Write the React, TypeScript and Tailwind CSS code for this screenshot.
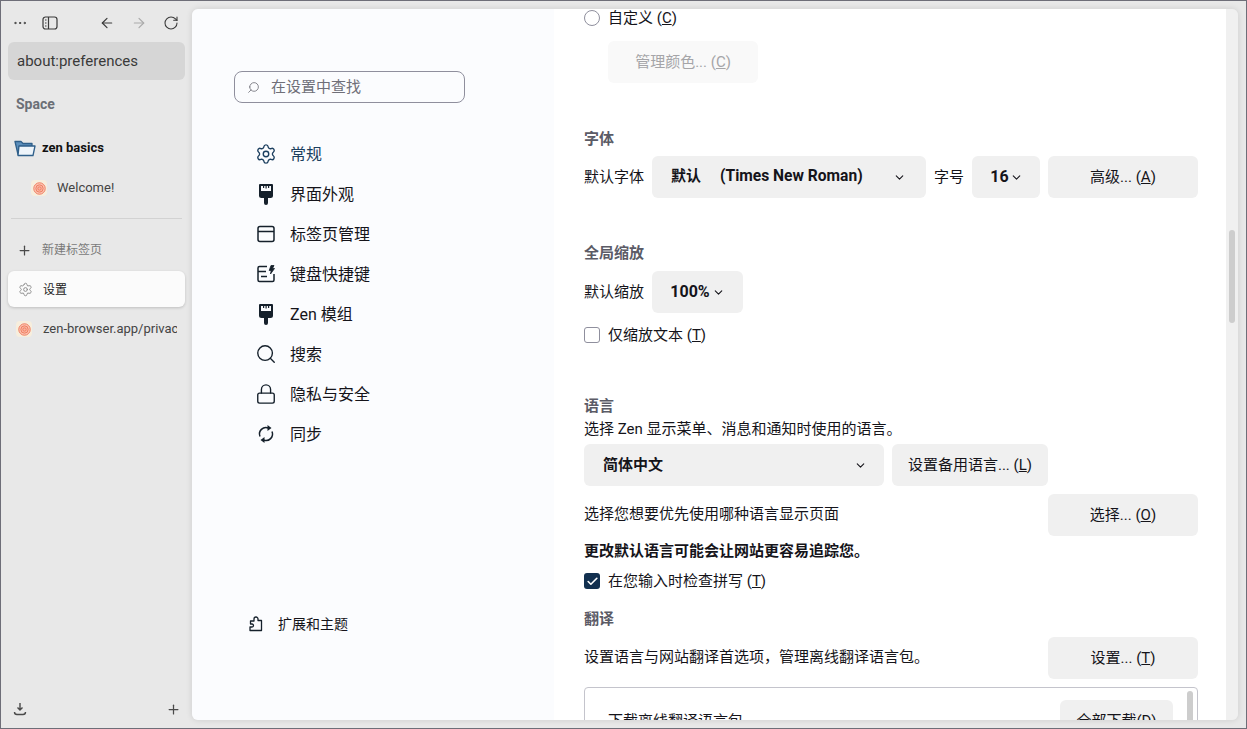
// Zen browser window showing about:preferences, scrolled to the fonts / language part of the page.
import type { ReactNode } from "react";
import { ArrowLeft, ArrowRight, Ellipsis, Plus, RotateCw, Search, Settings, Lock, ChevronDown, Check } from "lucide-react";

const FONT = { fontFamily: 'Roboto, "Noto Sans CJK SC", sans-serif' };
const BTN = "flex h-[42px] items-center rounded-[6px] bg-[#f0f0f0] text-[15px] text-[#15141a]";
const HEAD = "flex h-5 items-center text-[15px] font-semibold text-[#5b5b66]";

function Brush() {
  return (
    <svg width="18" height="22" viewBox="0 0 18 22" fill="#15202b">
      <path d="M3 1h12a1 1 0 0 1 1 1v10.500a2.500 2.500 0 0 1-2.500 2.500H11v5a2 2 0 0 1-4 0v-5H4.500A2.500 2.500 0 0 1 2 12.500V2a1 1 0 0 1 1-1z" />
      <path d="M4 3h10v5H4z" fill="#fbfcfe" />
      <path d="M6 3h1.200v2H6zM8.500 3h1.200v2.600H8.500zM11 3h1.200v2H11z" />
    </svg>
  );
}

function TabIcon() {
  return (
    <svg width="20" height="20" viewBox="0 0 20 20" fill="none" stroke="#15202b" strokeWidth="1.5">
      <rect x="2" y="2.500" width="16" height="15" rx="2" />
      <path d="M2 7.500h16" />
    </svg>
  );
}

function KeyIcon() {
  return (
    <svg width="20" height="20" viewBox="0 0 20 20" fill="none" stroke="#15202b" strokeWidth="1.500" strokeLinejoin="round">
      <path d="M11 2.500H3.500A1.500 1.500 0 0 0 2 4v12a1.500 1.500 0 0 0 1.500 1.500h13A1.500 1.500 0 0 0 18 16v-6" />
      <path d="M2 7.500h8M5 12.500h6" />
      <path d="M15 1.500h3l-1.500 3h2L14.500 10l.7-3.500h-2z" fill="#15202b" strokeWidth="0.8" />
    </svg>
  );
}

function SyncIcon() {
  return (
    <svg width="20" height="20" viewBox="0 0 20 20" fill="none" stroke="#15202b" strokeWidth="1.500">
      <path d="M4 12.500A6.500 6.500 0 0 1 12.500 4" />
      <path d="M16 7.500A6.500 6.500 0 0 1 7.500 16" />
      <path d="M11.500 1l4 3-4 3z" fill="#15202b" stroke="none" />
      <path d="M8.500 13l-4 3 4 3z" fill="#15202b" stroke="none" />
    </svg>
  );
}

function PuzzleIcon() {
  return (
    <svg width="16" height="16" viewBox="0 0 16 16" fill="none" stroke="#15202b" strokeWidth="1.300" strokeLinejoin="round">
      <path d="M2 14.500h11.500V4.500H10V3a2 2 0 0 0-4 0v2H2.500v3H4a1.500 1.500 0 0 1 0 3H2z" />
    </svg>
  );
}

function Favicon() {
  return (
    <span className="flex h-4 w-4 shrink-0 items-center justify-center rounded-[4px] bg-[#f7eedd]">
      <svg width="13" height="13" viewBox="0 0 12 12" fill="none" stroke="#f07f62" strokeWidth="0.9">
        <circle cx="6" cy="6" r="5.300" fill="#fbc3b2" />
        <circle cx="6" cy="6" r="3.400" fill="#f9b4a0" />
        <circle cx="6" cy="6" r="1.500" />
      </svg>
    </span>
  );
}

function Accel({ k }: { k: string }) {
  return (
    <>
      {" "}
      (<span className="underline underline-offset-1">{k}</span>)
    </>
  );
}

function Sidebar() {
  return (
    <aside className="flex w-[191px] shrink-0 flex-col pl-[7px] pr-[7px]">
      <div className="flex h-[41px] items-center pt-[3px] text-[#3a3a3a]">
        <Ellipsis size={16} className="ml-[4px]" strokeWidth={1.500} />
        <svg width="16" height="16" viewBox="0 0 16 16" fill="none" stroke="#3a3a3a" strokeWidth="1.200" className="ml-[14px]">
          <rect x="1" y="2" width="14" height="12" rx="2.500" />
          <path d="M6.500 2v12M3 5h1.500M3 8h1.500M3 11h1.500" />
        </svg>
        <ArrowLeft size={16} className="ml-[41px]" strokeWidth={1.800} />
        <ArrowRight size={16} className="ml-[16px] text-[#aaaaaa]" strokeWidth={1.800} />
        <RotateCw size={16} className="ml-[16px]" strokeWidth={1.600} />
      </div>
      <div className="flex h-[38px] items-center rounded-[6px] bg-[#d6d6d6] pl-[9px] text-[15px] text-[#3a3a3a]">about:preferences</div>
      <div className="mt-[14px] flex h-5 items-center pl-[8px] text-[14px] font-bold text-[#6b6f76]">Space</div>
      <div className="mt-[22px] flex h-6 items-center pl-[6px]">
        <svg width="22" height="18" viewBox="0 0 22 18" stroke="#2f5f8a" strokeWidth="1.300" strokeLinejoin="round">
          <path d="M1 2.500h6l2 2h9v3H5l-1 8z" fill="#5c8fbc" />
          <path d="M5 7h16l-2 9.500H4z" fill="#edf4fa" />
        </svg>
        <span className="ml-[6px] text-[13px] font-bold text-[#111111]">zen basics</span>
      </div>
      <div className="mt-[16px] flex h-6 items-center pl-[23px]">
        <Favicon />
        <span className="ml-[10px] text-[13px] text-[#444444]">Welcome!</span>
      </div>
      <div className="mx-[3px] mt-[18px] h-px bg-[#d2d2d2]" />
      <div className="mt-[19px] flex h-6 items-center pl-[9px] text-[12px] text-[#7a7a7a]">
        <Plus size={15} className="text-[#4a4a4a]" strokeWidth={2} />
        <span className="ml-[10px]">新建标签页</span>
      </div>
      <div className="mt-[9px] flex h-9 items-center rounded-[6px] bg-[#fbfbfb] pl-[10px] text-[12px] text-[#222222] shadow-[0_1px_3px_rgba(0,0,0,0.18)]">
        <Settings size={15} className="text-[#8a8a8a]" strokeWidth={1.500} />
        <span className="ml-[10px] pt-[2px]">设置</span>
      </div>
      <div className="mt-[10px] flex h-6 items-center overflow-hidden pl-[8px]">
        <Favicon />
        <span className="ml-[11px] w-[134px] overflow-hidden whitespace-nowrap text-[13px] text-[#444444]">zen-browser.app/privac</span>
      </div>
      <div className="mt-auto flex h-[26px] items-start justify-between pl-[5px] pr-[4px] text-[#4a4a4a]">
        <svg width="14" height="14" viewBox="0 0 14 14" fill="none" stroke="#4a4a4a" strokeWidth="1.400">
          <path d="M7 1v6.500M4.500 5.500L7 8l2.500-2.500" />
          <path d="M1.500 10c0 1.500 1 2.500 2.500 2.500h6c1.500 0 2.500-1 2.500-2.500" />
        </svg>
        <Plus size={15} strokeWidth={2} />
      </div>
    </aside>
  );
}

function NavItem({ icon, label, accent }: { icon: ReactNode; label: string; accent?: boolean }) {
  return (
    <div className={`flex h-10 items-center pl-[63px] text-[16px] ${accent ? "text-[#1c3f5f]" : "text-[#15141a]"}`}>
      <span className="flex w-[22px] justify-center">{icon}</span>
      <span className="ml-[13px] pt-[2px]">{label}</span>
    </div>
  );
}

function Nav() {
  return (
    <nav className="flex w-[362px] shrink-0 flex-col bg-[#fbfcfe]">
      <div className="ml-[42px] mt-[62px] flex h-8 w-[231px] items-center rounded-[8px] border border-[#8f8f9d] pl-[12px] text-[15px] text-[#6f6f78]">
        <Search size={13} className="-scale-x-100 text-[#6f6f78]" strokeWidth={1.500} />
        <span className="ml-[11px]">在设置中查找</span>
      </div>
      <div className="mt-[31px] flex flex-col">
        <NavItem accent label="常规" icon={<Settings size={22} className="text-[#1c3f5f]" strokeWidth={1.500} />} />
        <NavItem label="界面外观" icon={<Brush />} />
        <NavItem label="标签页管理" icon={<TabIcon />} />
        <NavItem label="键盘快捷键" icon={<KeyIcon />} />
        <NavItem label="Zen 模组" icon={<Brush />} />
        <NavItem label="搜索" icon={<Search size={22} className="text-[#15202b]" strokeWidth={1.500} />} />
        <NavItem label="隐私与安全" icon={<Lock size={22} className="text-[#15202b]" strokeWidth={1.500} />} />
        <NavItem label="同步" icon={<SyncIcon />} />
      </div>
      <div className="ml-[56px] mt-[160px] flex h-5 items-center text-[14px] text-[#15141a]">
        <PuzzleIcon />
        <span className="ml-[14px]">扩展和主题</span>
      </div>
    </nav>
  );
}

function Prefs() {
  return (
    <main className="flex min-w-0 flex-1 flex-col overflow-hidden bg-white pl-[30px] text-[15px] text-[#15141a]">
      <div className="w-[614px]">
        <div className="flex h-[18px] items-center">
          <span className="h-4 w-4 rounded-full border border-[#8f8f9d]" />
          <span className="ml-2">自定义<Accel k="C" /></span>
        </div>
        <div className="ml-6 mt-[14px] flex h-[42px] w-[150px] items-center justify-center rounded-[6px] bg-[#f9f9f9] text-[#a5a5a8]">
          管理颜色...<Accel k="C" />
        </div>

        <div className={`${HEAD} mt-[46px]`}>字体</div>
        <div className="mt-[7px] flex h-[42px] items-center">
          <span className="w-[68px]">默认字体</span>
          <div className={`${BTN} w-[274px] justify-between pl-[19px] pr-[20px] font-bold`}>
            <span>默认<span className="ml-[19px] text-[15.6px]">(Times New Roman)</span></span>
            <ChevronDown size={13} />
          </div>
          <span className="ml-2 w-[38px]">字号</span>
          <div className={`${BTN} w-[68px] justify-center gap-[1px] pl-[1px] font-bold`}>
            <span className="text-[16px]">16</span>
            <ChevronDown size={13} />
          </div>
          <div className={`${BTN} ml-2 w-[150px] justify-center`}>高级...<Accel k="A" /></div>
        </div>

        <div className={`${HEAD} mt-[45px]`}>全局缩放</div>
        <div className="mt-[8px] flex h-[42px] items-center">
          <span className="w-[68px]">默认缩放</span>
          <div className={`${BTN} w-[91px] justify-center gap-[2px] font-bold`}>
            <span className="text-[16px]">100%</span>
            <ChevronDown size={13} />
          </div>
        </div>
        <div className="mt-[12px] flex h-5 items-center">
          <span className="h-4 w-4 rounded-[3px] border border-[#8f8f9d]" />
          <span className="ml-2">仅缩放文本<Accel k="T" /></span>
        </div>

        <div className={`${HEAD} mt-[51px]`}>语言</div>
        <div className="mt-[3px] flex h-5 items-center">选择 Zen 显示菜单、消息和通知时使用的语言。</div>
        <div className="mt-[5px] flex h-[42px] items-center">
          <div className={`${BTN} w-[300px] justify-between pl-[19px] pr-[17px] font-bold`}>
            <span>简体中文</span>
            <ChevronDown size={13} />
          </div>
          <div className={`${BTN} ml-2 w-[156px] justify-center`}>设置备用语言...<Accel k="L" /></div>
        </div>
        <div className="mt-2 flex h-[42px] items-center justify-between">
          <span className="pb-[2px]">选择您想要优先使用哪种语言显示页面</span>
          <div className={`${BTN} w-[150px] justify-center`}>选择...<Accel k="O" /></div>
        </div>
        <div className="mt-[5px] flex h-5 items-center font-bold">更改默认语言可能会让网站更容易追踪您。</div>
        <div className="mt-[10px] flex h-5 items-center">
          <span className="flex h-4 w-4 items-center justify-center rounded-[3px] bg-[#12304f]">
            <Check size={13} className="text-white" strokeWidth={3} />
          </span>
          <span className="ml-2">在您输入时检查拼写<Accel k="T" /></span>
        </div>
        <div className={`${HEAD} mt-[18px]`}>翻译</div>
        <div className="mt-[8px] flex h-[42px] items-center justify-between">
          <span className="pb-[2px]">设置语言与网站翻译首选项，管理离线翻译语言包。</span>
          <div className={`${BTN} w-[150px] justify-center`}>设置...<Accel k="T" /></div>
        </div>
        <div className="mt-2 flex h-[80px] shrink-0 items-start rounded-[4px] border border-[#c4c4cc] pl-[23px]">
          <span className="mt-[22px] flex-1">下载离线翻译语言包</span>
          <div className={`${BTN} mt-3 w-[113px] justify-center`}>全部下载(D)</div>
          <span className="ml-[14px] mr-1 mt-[3px] h-[60px] w-[6px] rounded-full bg-[#cdcdcd]" />
        </div>
      </div>
    </main>
  );
}

function PageScrollbar() {
  return (
    <div className="flex w-[12px] shrink-0 justify-center bg-[#f0f0f0] pt-[221px]">
      <div className="h-[93px] w-[6px] rounded-full bg-[#cdcdcd]" />
    </div>
  );
}

export default function App() {
  return (
    <div style={FONT} className="flex h-[729px] w-[1247px] overflow-hidden border border-[#6e6e78] bg-[#e8e8e8]">
      <Sidebar />
      <div className="mb-[8px] mr-[8px] mt-[8px] flex min-w-0 flex-1 overflow-hidden rounded-[6px] shadow-[0_0_6px_rgba(0,0,0,0.12)]">
        <Nav />
        <Prefs />
        <PageScrollbar />
      </div>
    </div>
  );
}
